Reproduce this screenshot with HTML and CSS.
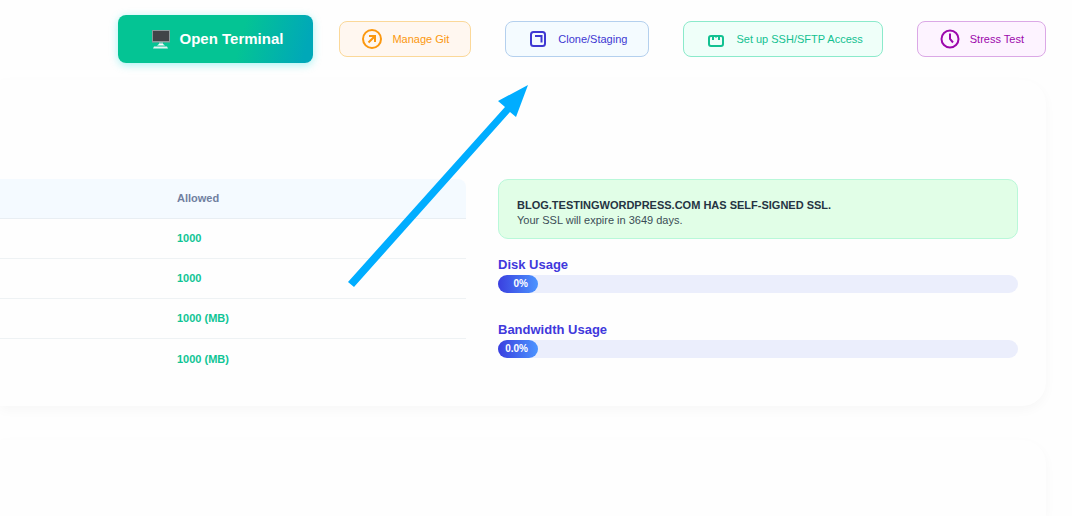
FILE: index.html
```html
<!DOCTYPE html>
<html lang="en">
<head>
<meta charset="utf-8">
<meta name="viewport" content="width=device-width, initial-scale=1">
<title>Website dashboard</title>
<link rel="stylesheet" href="styles.css">
</head>
<body>
<header class="toolbar">
  <button class="terminal" type="button">
    <svg class="monitor" viewBox="0 0 20 20" aria-hidden="true">
      <path d="M1 1h18v12.500H1z" fill="#8b9a9c"/>
      <path d="M2 2h16v10H2z" fill="#414448"/>
      <path d="M8 13.500h4v2H8z" fill="#a9d8d5"/>
      <path d="M6 16.500l2-1.500h4l2 1.500z" fill="#fff"/>
      <path d="M3 17.500h13l1 2H2z" fill="#e2f4f3"/>
    </svg>
    <span>Open Terminal</span>
  </button>
  <nav class="actions" aria-label="Website actions">
    <a class="action git" href="#git">
      <svg class="icon icon-large" viewBox="0 0 22 22" aria-hidden="true"><circle cx="11" cy="11" r="9"/><path d="M7.500 14.500L13.800 8.200M8 8h6v6"/></svg>
      <span>Manage Git</span>
    </a>
    <a class="action clone" href="#clone">
      <svg class="icon" viewBox="0 0 18 18" aria-hidden="true"><rect x="2" y="2" width="14" height="14" rx="2.500"/><path d="M6 6h6.500v6.500"/></svg>
      <span>Clone/Staging</span>
    </a>
    <a class="action ssh" href="#ssh">
      <svg class="icon" viewBox="0 0 18 18" aria-hidden="true"><rect x="2" y="6" width="14" height="10" rx="2"/><path d="M6 6v4M12 6v4M9 6v1.500"/></svg>
      <span>Set up SSH/SFTP Access</span>
    </a>
    <a class="action stress" href="#stress">
      <svg class="icon icon-large" viewBox="0 0 22 22" aria-hidden="true"><circle cx="11" cy="11" r="8.500"/><path d="M11 5.500v5.500l3 3.500"/></svg>
      <span>Stress Test</span>
    </a>
  </nav>
</header>
<main>
  <section class="card overview">
    <table class="limits">
      <thead><tr><th></th><th scope="col">Allowed</th></tr></thead>
      <tbody>
        <tr><td></td><td>1000</td></tr>
        <tr><td></td><td>1000</td></tr>
        <tr><td></td><td>1000 (MB)</td></tr>
        <tr><td></td><td>1000 (MB)</td></tr>
      </tbody>
    </table>
    <div class="status">
      <div class="ssl">
        <strong>BLOG.TESTINGWORDPRESS.COM HAS SELF-SIGNED SSL.</strong>
        <p>Your SSL will expire in 3649 days.</p>
      </div>
      <div class="usage">
        <h2 id="disk">Disk Usage</h2>
        <div class="track" role="progressbar" aria-labelledby="disk" aria-valuenow="0"><div class="fill">0%</div></div>
      </div>
      <div class="usage">
        <h2 id="bandwidth">Bandwidth Usage</h2>
        <div class="track" role="progressbar" aria-labelledby="bandwidth" aria-valuenow="0"><div class="fill">0.0%</div></div>
      </div>
    </div>
  </section>
  <section class="card next"></section>
</main>
<svg class="pointer" viewBox="0 0 184 206" aria-hidden="true"><path d="M1 198L158 23L151 17L181 1L169 33L163 28L7 203z"/></svg>
</body>
</html>
```
FILE: styles.css
```css
* { box-sizing: border-box; }
body {
  margin: 0;
  height: 100vh;
  overflow: hidden;
  display: flex;
  flex-direction: column;
  background: #fefefe;
  color: #2f3b52;
  font-family: "Liberation Sans", Arial, sans-serif;
  font-size: 11px;
}
.toolbar {
  display: flex;
  justify-content: flex-end;
  align-items: center;
  gap: 26px;
  padding: 15px 26px;
}
.terminal {
  display: flex;
  align-items: center;
  gap: 9px;
  height: 48px;
  padding: 0 30px 1px 33px;
  border: 0;
  border-radius: 8px;
  background: linear-gradient(105deg, #04c494 0%, #04c494 62%, #00a8b8 95%);
  box-shadow: 0 2px 8px rgba(0, 220, 220, 0.35);
  color: #fff;
  font: bold 15px "Liberation Sans", Arial, sans-serif;
  white-space: nowrap;
}
.monitor { width: 20px; height: 20px; }
.actions { display: flex; gap: 34px; }
.action {
  display: flex;
  align-items: center;
  gap: 10px;
  height: 36px;
  border: 1px solid;
  border-radius: 8px;
  text-decoration: none;
  white-space: nowrap;
}
.action span { padding-bottom: 1px; }
.icon {
  width: 18px;
  height: 18px;
  fill: none;
  stroke: currentColor;
  stroke-width: 2;
}
.icon-large { width: 22px; height: 22px; }
.git { padding: 0 21px; gap: 9px; color: #fb980f; background: #fff7f0; border-color: #fbd899; }
.clone { gap: 11px; padding: 0 21px 0 23px; color: #3e38d2; background: #f4fbff; border-color: #b4d0ee; }
.ssh { gap: 11px; padding: 0 19px 0 23px; color: #12c191; background: #effff9; border-color: #8beacb; }
.stress { gap: 9px; padding: 0 21px; color: #9c08ac; background: #fdf3ff; border-color: #dba8e6; }
main {
  flex: 1;
  display: flex;
  flex-direction: column;
  gap: 34px;
  padding-right: 26px;
}
.card {
  background: #fefefe;
  border-radius: 0 24px 24px 0;
  box-shadow: 0 4px 12px rgba(0, 0, 0, 0.03);
}
.overview {
  display: grid;
  grid-template-columns: minmax(0, 466fr) minmax(0, 520fr);
  gap: 32px;
  align-items: start;
  margin-top: 2px;
  padding: 99px 28px 27px 0;
}
.next { flex: 1; border-bottom-right-radius: 0; }
.limits {
  width: 100%;
  table-layout: fixed;
  border-collapse: separate;
  border-spacing: 0;
}
.limits th, .limits td {
  height: 40px;
  padding: 0 16px 1px;
  border-bottom: 1px solid #eef2f4;
  text-align: left;
  font-weight: bold;
  color: #10c595;
}
.limits th {
  background: #f4faff;
  color: #70809f;
  border-bottom-color: #e8eef3;
}
.limits th:first-child { width: 161px; }
.limits th:last-child { border-top-right-radius: 8px; }
.limits tr:last-child td { border-bottom: 0; }
.ssl {
  padding: 18px 18px 10px;
  border: 1px solid #b9f8d9;
  border-radius: 10px;
  background: #e1fee7;
  line-height: 15px;
}
.ssl strong { display: block; color: #253443; }
.ssl p { margin: 0; color: #3b4d56; }
.usage { margin-top: 18px; }
.usage + .usage { margin-top: 29px; }
.usage h2 {
  margin: 0;
  padding-bottom: 2px;
  color: #4038dc;
  font-size: 13px;
  line-height: 16px;
}
.track {
  height: 18px;
  border-radius: 9px;
  background: #ebeefc;
}
.fill {
  width: 40px;
  height: 18px;
  padding-right: 10px;
  border-radius: 9px;
  background: linear-gradient(90deg, #3a3fdf, #4c94ff);
  color: #fff;
  font-size: 10px;
  font-weight: bold;
  line-height: 18px;
  text-align: right;
}
.pointer {
  position: absolute;
  left: 347px;
  top: 84px;
  width: 184px;
  height: 206px;
  fill: #00adff;
  pointer-events: none;
}
```
